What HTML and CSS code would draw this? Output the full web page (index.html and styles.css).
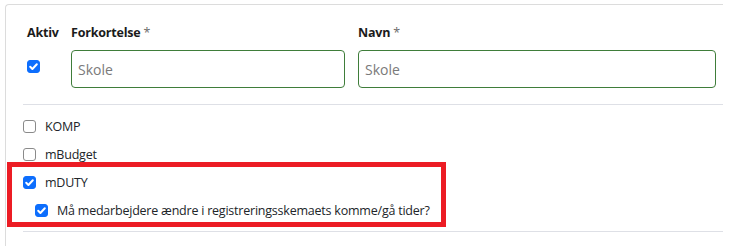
FILE: index.html
```html
<!DOCTYPE html>
<html lang="da">
<head>
    <meta charset="UTF-8">
    <meta name="viewport" content="width=device-width, initial-scale=1.0">
    <title>Aktivitet</title>
    <link rel="stylesheet" href="styles.css">
</head>
<body>
    <div class="card">
        <div class="form-row">
            <div class="label">Aktiv</div>
            <div class="label">Forkortelse <span class="req">*</span></div>
            <div class="label">Navn <span class="req">*</span></div>

            <span class="box checked head-box">
                <svg viewBox="0 0 13 13" width="13" height="13"><path d="M3.2 6.8 L5.4 9 L9.8 4.2" fill="none" stroke="#fff" stroke-width="2" stroke-linecap="round" stroke-linejoin="round"/></svg>
            </span>
            <input class="field" type="text" placeholder="Skole">
            <input class="field" type="text" placeholder="Skole">
        </div>

        <div class="divider"></div>

        <div class="check-list">
            <label class="check">
                <span class="box"></span>
                <span>KOMP</span>
            </label>
            <label class="check">
                <span class="box"></span>
                <span>mBudget</span>
            </label>
            <label class="check">
                <span class="box checked">
                    <svg viewBox="0 0 13 13" width="13" height="13"><path d="M3.2 6.8 L5.4 9 L9.8 4.2" fill="none" stroke="#fff" stroke-width="2" stroke-linecap="round" stroke-linejoin="round"/></svg>
                </span>
                <span>mDUTY</span>
            </label>
            <label class="check sub">
                <span class="box checked">
                    <svg viewBox="0 0 13 13" width="13" height="13"><path d="M3.2 6.8 L5.4 9 L9.8 4.2" fill="none" stroke="#fff" stroke-width="2" stroke-linecap="round" stroke-linejoin="round"/></svg>
                </span>
                <span>Må medarbejdere ændre i registreringsskemaets komme/gå tider?</span>
            </label>
        </div>

        <div class="divider"></div>
    </div>

    <div class="highlight"></div>
</body>
</html>
```

FILE: styles.css
```css
* { margin: 0; padding: 0; box-sizing: border-box; }
body { background: #fff; font-family: "Open Sans", Arial, sans-serif; font-size: 13px; color: #212529; height: 246px; overflow: hidden; position: relative; }

.card { margin: 4px 0 0 5px; width: 718px; height: 242px; border-top: 1px solid #dcdcdc; border-left: 1px solid #dcdcdc; border-top-left-radius: 4px; padding: 19px 0 0 17px; }

.form-row { display: grid; grid-template-columns: 31px 274px 358px; column-gap: 13px; row-gap: 8px; padding-left: 4px; }
.label { font-weight: bold; font-size: 12.5px; letter-spacing: -0.2px; line-height: 18px; color: #1b1b1b; white-space: nowrap; }
.req { font-weight: normal; color: #6c6c6c; }
.field { height: 38px; border: 1px solid #3f7d3a; border-radius: 4px; padding: 0 6px; font-family: inherit; font-size: 14px; color: #333; outline: none; }
.field::placeholder { color: #7a7a7a; }
.head-box { margin-top: 10px; }

.divider { width: 700px; height: 1px; background: #dee0e6; }
.form-row + .divider { margin-top: 16px; }

.check-list { padding: 7px 0 7px; }
.check { display: flex; align-items: center; gap: 9px; height: 28px; font-size: 12.5px; letter-spacing: -0.22px; cursor: pointer; }
.check.sub { padding-left: 12px; }

.box { width: 13px; height: 13px; border: 1px solid #8a8a8a; border-radius: 3px; background: #fff; display: flex; flex-shrink: 0; }
.box.checked { background: #0d6efd; border-color: #0d6efd; }
.box svg { margin: -1px; }

.highlight { position: absolute; left: 7px; top: 162px; width: 439px; height: 65px; border: 5px solid #ec1c24; pointer-events: none; }
```
